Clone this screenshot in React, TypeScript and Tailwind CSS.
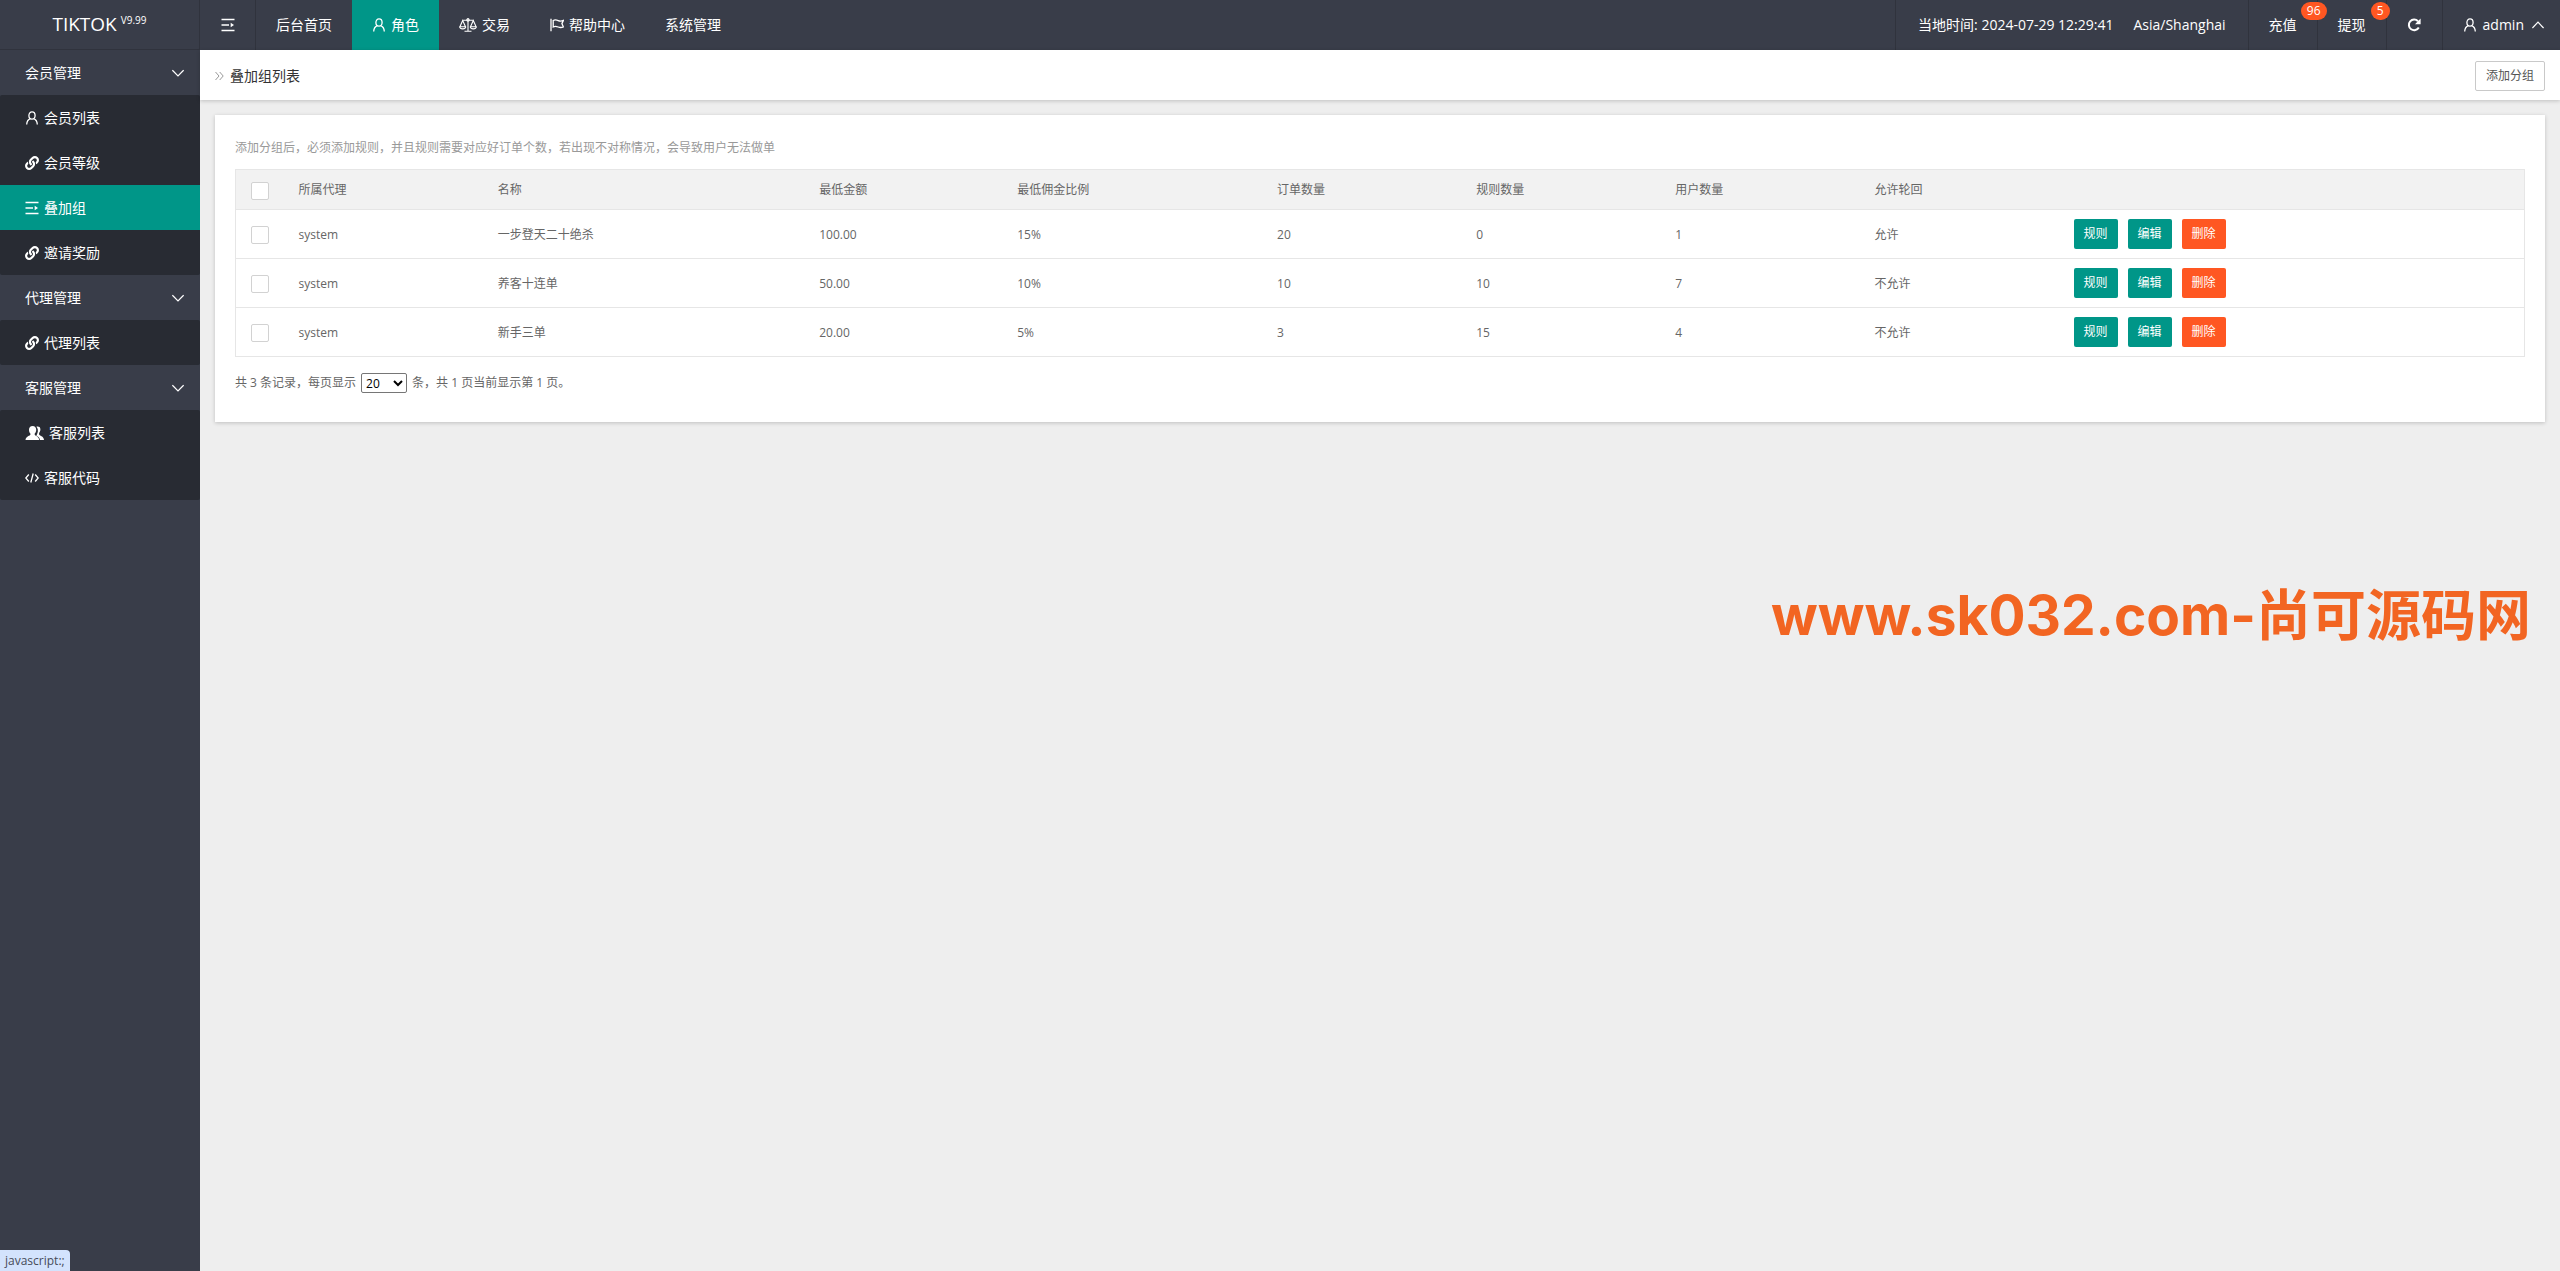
import React, { useState } from "react";
import { FaLink } from "react-icons/fa";

type IconName = "user" | "link" | "spread" | "group" | "code" | "scale" | "flag";

interface MenuItem {
  title: string;
  icon: IconName;
}

interface MenuGroup {
  title: string;
  items: MenuItem[];
}

interface GroupRow {
  id: number;
  agent: string;
  name: string;
  minAmount: string;
  minRate: string;
  orders: number;
  rules: number;
  users: number;
  loop: string;
}

const NAV: { title: string; icon?: IconName }[] = [
  { title: "后台首页" },
  { title: "角色", icon: "user" },
  { title: "交易", icon: "scale" },
  { title: "帮助中心", icon: "flag" },
  { title: "系统管理" },
];

const MENU: MenuGroup[] = [
  {
    title: "会员管理",
    items: [
      { title: "会员列表", icon: "user" },
      { title: "会员等级", icon: "link" },
      { title: "叠加组", icon: "spread" },
      { title: "邀请奖励", icon: "link" },
    ],
  },
  { title: "代理管理", items: [{ title: "代理列表", icon: "link" }] },
  {
    title: "客服管理",
    items: [
      { title: "客服列表", icon: "group" },
      { title: "客服代码", icon: "code" },
    ],
  },
];

const COLUMNS = [
  { title: "所属代理", width: "w-[8.7%]" },
  { title: "名称", width: "w-[14.05%]" },
  { title: "最低金额", width: "w-[8.65%]" },
  { title: "最低佣金比例", width: "w-[11.35%]" },
  { title: "订单数量", width: "w-[8.7%]" },
  { title: "规则数量", width: "w-[8.7%]" },
  { title: "用户数量", width: "w-[8.7%]" },
  { title: "允许轮回", width: "w-[8.7%]" },
];

const ROWS: GroupRow[] = [
  { id: 1, agent: "system", name: "一步登天二十绝杀", minAmount: "100.00", minRate: "15%", orders: 20, rules: 0, users: 1, loop: "允许" },
  { id: 2, agent: "system", name: "养客十连单", minAmount: "50.00", minRate: "10%", orders: 10, rules: 10, users: 7, loop: "不允许" },
  { id: 3, agent: "system", name: "新手三单", minAmount: "20.00", minRate: "5%", orders: 3, rules: 15, users: 4, loop: "不允许" },
];

function Icon({ name }: { name: IconName }) {
  const line = { fill: "none", stroke: "currentColor", strokeWidth: 1.3 };
  switch (name) {
    case "user":
      return (
        <svg className="h-3.5 w-3.5 shrink-0" viewBox="0 0 14 14" {...line}>
          <ellipse cx="7" cy="4.5" rx="3.1" ry="3.7" />
          <path d="M1.700 13.500c.1-3 1.400-4.900 3.700-5.800M12.300 13.500c-.1-3-1.400-4.900-3.700-5.800" />
        </svg>
      );
    case "link":
      return <FaLink className="h-3.5 w-3.5 shrink-0" />;
    case "spread":
      return (
        <svg className="h-3.5 w-3.5 shrink-0" viewBox="0 0 14 14" {...line} strokeWidth={1.5}>
          <path d="M.5 1.500h13M.5 7h7.500M.5 12.500h13" />
          <path d="M9.700 4.800v4.400L13 7z" fill="currentColor" stroke="none" />
        </svg>
      );
    case "group":
      return (
        <svg className="h-3.5 w-[19px] shrink-0" viewBox="0 0 19 14" fill="currentColor">
          <path d="M11.400.8c1-.7 4-.6 4 2.500 0 1.800-.6 3-1.300 3.800v1.400c0 .9 4.900 1.700 4.900 5.500h-4c-.3-2.200-1.800-3.300-3.600-4.200.5-1.300 1.900-3.600 1.400-6.200-.2-1.200-.7-2.100-1.400-2.800z" />
          <path d="M7.600 0c2.200 0 3.600 1.500 3.600 3.700 0 1.800-.7 3.100-1.500 3.900v1.200c0 .9 4.300 1.500 4.500 5.200H.500c.2-3.700 4.900-4.300 4.900-5.200V7.600C4.600 6.800 4 5.500 4 3.700 4 1.500 5.400 0 7.600 0z" />
        </svg>
      );
    case "code":
      return (
        <svg className="h-3.5 w-3.5 shrink-0" viewBox="0 0 14 14" {...line}>
          <path d="M3.800 3.500.8 7l3 3.500M10.200 3.500l3 3.500-3 3.500M8.200 2.500l-2.400 9" />
        </svg>
      );
    case "scale":
      return (
        <svg className="h-3.5 w-[18px] shrink-0" viewBox="0 0 18 14" {...line} strokeWidth={1.1}>
          <path d="M9 0v13M5.500 13.300h7M3.500 2.200h11" />
          <path d="M3.700 2.500.9 8.800h5.600zM14.300 2.500l-2.800 6.300h5.600z" />
          <path d="M.7 8.800c.2 2.700 5.800 2.700 6 0M11.300 8.800c.2 2.700 5.800 2.700 6 0" />
          <circle cx="9" cy="2" r="1.2" />
        </svg>
      );
    case "flag":
      return (
        <svg className="h-3.5 w-3.5 shrink-0" viewBox="0 0 14 14" {...line}>
          <path d="M1 .8v12.400" />
          <path d="M3.200 2.500c1.800-1 3.400-.6 5 .1s3.200.7 5.200-.2l-1.500 3.200 1.500 3.300c-2 .9-3.600.7-5.200.1s-3.200-1-5 0z" />
        </svg>
      );
  }
}

function Chevron({ up = false }: { up?: boolean }) {
  return (
    <svg className="h-3 w-3 shrink-0" viewBox="0 0 12 12" fill="none" stroke="currentColor" strokeWidth="1.2">
      <path d={up ? "M.4 9 6 3.200 11.600 9" : "M.4 3.200 6 9l5.600-5.800"} />
    </svg>
  );
}

const checkboxClass =
  "block h-[18px] w-[18px] appearance-none rounded-[2px] border border-[#d2d2d2] bg-white checked:border-[#5fb878] checked:bg-[#5fb878]";

export default function App() {
  const [activeNav, setActiveNav] = useState("角色");
  const [activeMenu, setActiveMenu] = useState("叠加组");
  const [selected, setSelected] = useState<number[]>([]);

  const toggleRow = (id: number) => {
    setSelected((prev) => (prev.includes(id) ? prev.filter((x) => x !== id) : [...prev, id]));
  };

  return (
    <div className="flex min-h-screen bg-[#eeeeee] font-['Open_Sans','Noto_Sans_CJK_SC',sans-serif] text-sm text-[#333333]">
      {/* Sidebar */}
      <aside className="w-[200px] shrink-0 bg-[#393d49] text-white">
        <div className="flex h-[50px] items-center justify-center gap-1 border-r border-b border-[#30333d]">
          <span className="text-[19px]">TIKTOK</span>
          <sup className="text-[10px]">V9.99</sup>
        </div>
        <nav>
          {MENU.map((group) => (
            <div key={group.title}>
              <button className="flex h-[45px] w-full items-center justify-between pr-4 pl-[25px]">
                <span>{group.title}</span>
                <Chevron />
              </button>
              <div className="overflow-hidden rounded-[2px] bg-[#282b33]">
                {group.items.map((item) => (
                  <a
                    key={item.title}
                    href="#"
                    onClick={() => setActiveMenu(item.title)}
                    className={`flex h-[45px] items-center gap-[5px] pl-[25px] ${
                      item.title === activeMenu ? "bg-[#009688]" : "hover:bg-[#4e5465]"
                    }`}
                  >
                    <Icon name={item.icon} />
                    {item.title}
                  </a>
                ))}
              </div>
            </div>
          ))}
        </nav>
      </aside>

      <div className="flex min-w-0 flex-1 flex-col">
        {/* Top bar */}
        <header className="flex h-[50px] justify-between bg-[#393d49] text-white">
          <nav className="flex">
            <button aria-label="收起菜单" className="flex w-14 items-center justify-center border-r border-[#30333d]">
              <Icon name="spread" />
            </button>
            {NAV.map((item) => (
              <a
                key={item.title}
                href="#"
                onClick={() => setActiveNav(item.title)}
                className={`flex items-center gap-[5px] px-5 ${item.title === activeNav ? "bg-[#009688]" : ""}`}
              >
                {item.icon && <Icon name={item.icon} />}
                {item.title}
              </a>
            ))}
          </nav>
          <div className="flex">
            <div className="flex items-center gap-5 border-x border-[#30333d] px-[22px]">
              <span>当地时间: 2024-07-29 12:29:41</span>
              <span>Asia/Shanghai</span>
            </div>
            <a href="#" className="relative flex items-center border-r border-[#30333d] px-5">
              充值
              <span className="absolute top-0.5 -right-2.5 z-10 h-[18px] rounded-full bg-[#ff5722] px-1.5 text-xs leading-[18px]">96</span>
            </a>
            <a href="#" className="relative flex items-center border-r border-[#30333d] px-5">
              提现
              <span className="absolute top-0.5 -right-1 z-10 h-[18px] rounded-full bg-[#ff5722] px-1.5 text-xs leading-[18px]">5</span>
            </a>
            <button aria-label="刷新" className="flex w-14 items-center justify-center border-r border-[#30333d]">
              <svg className="h-3.5 w-3.5" viewBox="0 0 14 14" fill="none" stroke="currentColor" strokeWidth="2">
                <path d="M11.800 9.500A5.300 5.300 0 1 1 11 3.200" />
                <path d="M13.600.6v5.600H8z" fill="currentColor" stroke="none" />
              </svg>
            </button>
            <button className="flex items-center gap-1.5 pr-4 pl-5">
              <Icon name="user" />
              <span className="pr-0.5">admin</span>
              <Chevron up />
            </button>
          </div>
        </header>

        {/* Page title */}
        <div className="flex h-[50px] items-center justify-between bg-white px-[15px] pt-0.5 shadow-[0_1px_4px_rgba(0,0,0,0.2)]">
          <h1 className="flex items-center gap-1.5">
            <svg className="h-2.5 w-[9px] text-[#999999]" viewBox="0 0 9 10" fill="none" stroke="currentColor">
              <path d="M.5 1l3.500 4-3.500 4M4.700 1l3.500 4-3.500 4" />
            </svg>
            叠加组列表
          </h1>
          <button className="h-[30px] rounded-[2px] border border-[#c9c9c9] bg-white px-2.5 text-xs text-[#555555]">
            添加分组
          </button>
        </div>

        {/* Content card */}
        <main className="m-[15px] bg-white px-5 pt-5 pb-[29px] text-xs text-[#666666] shadow-[0_1px_4px_rgba(0,0,0,0.2)]">
          <p className="pt-[5px] pb-[13px] text-[#999999]">
            添加分组后，必须添加规则，并且规则需要对应好订单个数，若出现不对称情况，会导致用户无法做单
          </p>
          <table className="w-full table-fixed border-collapse border border-[#e6e6e6] text-left">
            <thead>
              <tr className="h-10 border-b border-[#e6e6e6] bg-[#f2f2f2]">
                <th className="w-12 pt-0.5 pl-[15px]">
                  <input
                    type="checkbox"
                    aria-label="全选"
                    className={checkboxClass}
                    checked={selected.length === ROWS.length}
                    onChange={() => setSelected(selected.length === ROWS.length ? [] : ROWS.map((r) => r.id))}
                  />
                </th>
                {COLUMNS.map((col) => (
                  <th key={col.title} className={`px-[15px] font-normal ${col.width}`}>
                    {col.title}
                  </th>
                ))}
                <th />
              </tr>
            </thead>
            <tbody>
              {ROWS.map((row) => (
                <tr key={row.id} className="h-[49px] border-b border-[#e6e6e6]">
                  <td className="pt-0.5 pl-[15px]">
                    <input
                      type="checkbox"
                      aria-label={row.name}
                      className={checkboxClass}
                      checked={selected.includes(row.id)}
                      onChange={() => toggleRow(row.id)}
                    />
                  </td>
                  <td className="px-[15px] pt-0.5">{row.agent}</td>
                  <td className="px-[15px] pt-0.5">{row.name}</td>
                  <td className="px-[15px] pt-0.5">{row.minAmount}</td>
                  <td className="px-[15px] pt-0.5">{row.minRate}</td>
                  <td className="px-[15px] pt-0.5">{row.orders}</td>
                  <td className="px-[15px] pt-0.5">{row.rules}</td>
                  <td className="px-[15px] pt-0.5">{row.users}</td>
                  <td className="px-[15px] pt-0.5">{row.loop}</td>
                  <td className="px-[15px]">
                    <div className="flex gap-2.5 text-white">
                      <button className="h-[30px] rounded-[2px] bg-[#009688] px-2.5">规则</button>
                      <button className="h-[30px] rounded-[2px] bg-[#009688] px-2.5">编辑</button>
                      <button className="h-[30px] rounded-[2px] bg-[#ff5722] px-2.5">删除</button>
                    </div>
                  </td>
                </tr>
              ))}
            </tbody>
          </table>
          <div className="flex items-center gap-[5px] pt-4">
            <label htmlFor="page-size">共 3 条记录，每页显示</label>
            <select id="page-size" defaultValue="20" className="h-5 w-[46px] rounded-[2px] border border-[#767676] bg-white text-xs text-black">
              <option>10</option>
              <option>20</option>
              <option>50</option>
            </select>
            <span>条，共 1 页当前显示第 1 页。</span>
          </div>
        </main>
      </div>

      {/* Site mark */}
      <div className="pointer-events-none fixed top-[580px] right-[29px] font-['Inter','Noto_Sans_CJK_SC',sans-serif] text-[55px] leading-[70px] font-bold whitespace-nowrap text-[#f26522]">
        www.sk032.com-尚可源码网
      </div>

      {/* Link status bubble */}
      <div className="fixed bottom-0 left-0 h-[21px] rounded-tr-[4px] bg-[#d3e3fd] px-[5px] text-xs leading-[22px] text-[#474c59]">
        javascript:;
      </div>
    </div>
  );
}
